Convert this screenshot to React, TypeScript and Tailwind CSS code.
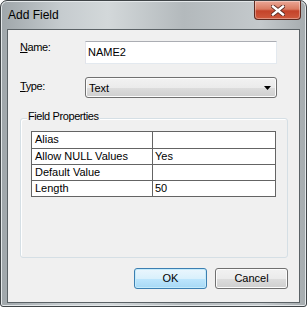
export default function App() {
  const font = { fontFamily: '"Liberation Sans", Arial, sans-serif' };
  return (
    <div className="w-[307px] h-[309px] bg-white" style={font}>
      <div className="w-[307px] h-[307px] flex flex-col rounded-t-[7px] rounded-b-[3px] border border-[#3f4447] bg-[linear-gradient(90deg,#9fa6aa,#c6cccf_20%,#d3d8da_35%,#b3b9bc_60%,#c4c9cc_85%,#a6acaf)] shadow-[inset_0_0_0_1px_#e4e8ea]">
        <div className="h-[28px] flex items-start justify-between">
          <span className="ml-[7px] mt-[7px] text-[12px] leading-[15px] text-black">Add Field</span>
          <div className="mr-[5px] w-[47px] h-[19px] rounded-b-[4px] border border-t-0 border-[#5e2a20] bg-[linear-gradient(180deg,#eaa796_0%,#d97b62_45%,#c4432a_55%,#cf5a3e_100%)] shadow-[inset_0_0_0_1px_rgba(255,255,255,0.35)] flex items-center justify-center">
            <svg width="14" height="11" viewBox="0 0 14 11">
              <path d="M2 1.5 L12 9.5 M12 1.5 L2 9.5" stroke="#5a2a22" strokeWidth="4.2" strokeLinecap="square" />
              <path d="M2 1.5 L12 9.5 M12 1.5 L2 9.5" stroke="#ffffff" strokeWidth="2.4" strokeLinecap="square" />
            </svg>
          </div>
        </div>
        <div className="mx-[6px] h-[274px] border border-[#5b6266] bg-[#f0f0f0] flex flex-col text-[11px] leading-[13px] text-black">
          <div className="mt-[11px] ml-[12px] flex items-start">
            <span className="w-[65px] tracking-[-0.4px]"><u>N</u>ame:</span>
            <div className="w-[192px] h-[23px] border border-[#abadb3] border-l-[#e2e3ea] border-r-[#e3e9ef] border-b-[#e3e9ef] bg-white pl-[2px] pt-[3px] leading-[15px]">NAME2</div>
          </div>
          <div className="mt-[13px] ml-[12px] flex items-start">
            <span className="w-[65px] mt-[3px] tracking-[-0.4px]"><u>T</u>ype:</span>
            <div className="w-[192px] h-[21px] rounded-[3px] border border-[#707070] bg-[linear-gradient(180deg,#f2f2f2_0%,#ebebeb_50%,#dddddd_50%,#cfcfcf_100%)] shadow-[inset_0_0_0_1px_#fcfcfc] flex items-center justify-between pl-[3px] pr-[5px] pt-[1px]">
              <span>Text</span>
              <svg width="7" height="5" viewBox="0 0 7 5" className="mt-[1px]">
                <path d="M0 0 H7 L3.5 4 Z" fill="#000" />
              </svg>
            </div>
          </div>
          <div className="relative mt-[20px] ml-[12px] w-[268px] h-[140px] rounded-[3px] border border-[#d5dfe5] shadow-[inset_1px_1px_0_#ffffff]">
            <span className="absolute left-[6px] top-[-9px] px-[1px] bg-[#f0f0f0] tracking-[-0.4px]">Field Properties</span>
            <div className="mt-[12px] ml-[10px] w-[245px] border border-[#646464] bg-white flex flex-col">
              {[
                ["Alias", ""],
                ["Allow NULL Values", "Yes"],
                ["Default Value", ""],
                ["Length", "50"],
              ].map(([k, v], i) => (
                <div key={k} className={"flex h-[16px] " + (i === 0 ? "h-[15px]" : "border-t border-[#646464]")}>
                  <div className="w-[120px] pl-[3px] leading-[15px]">{k}</div>
                  <div className="flex-1 border-l border-[#646464] pl-[2px] leading-[15px]">{v}</div>
                </div>
              ))}
            </div>
          </div>
          <div className="mt-[10px] mr-[11px] flex justify-end gap-[8px]">
            <div className="w-[73px] h-[21px] rounded-[3px] border border-[#3c7fb1] bg-[linear-gradient(180deg,#eaf6fd_0%,#d9f0fc_50%,#bee6fd_50%,#a7d9f5_100%)] shadow-[inset_0_0_0_1px_#c5ebfb] flex items-center justify-center">OK</div>
            <div className="w-[73px] h-[21px] rounded-[3px] border border-[#707070] bg-[linear-gradient(180deg,#f2f2f2_0%,#ebebeb_50%,#dddddd_50%,#cfcfcf_100%)] shadow-[inset_0_0_0_1px_#fcfcfc] flex items-center justify-center">Cancel</div>
          </div>
        </div>
      </div>
    </div>
  );
}
